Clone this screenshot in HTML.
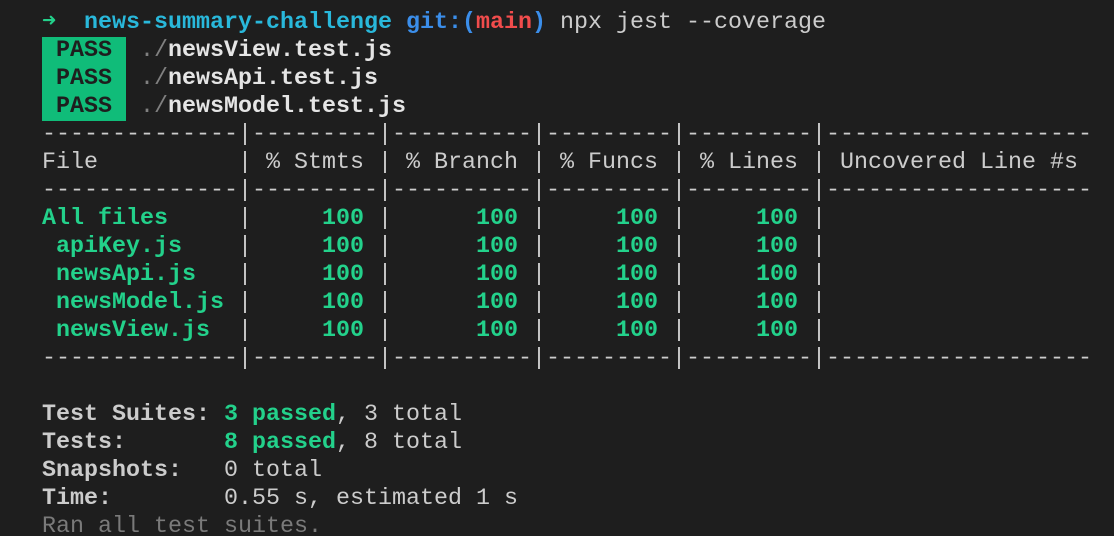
<!DOCTYPE html>
<html><head><meta charset="utf-8">
<style>
html,body{margin:0;padding:0;background:#1e1e1e;width:1114px;height:536px;overflow:hidden}
pre{margin:-19px 0 0 42px;font-family:"Liberation Mono","DejaVu Sans Mono",monospace;font-size:23.33px;letter-spacing:0;line-height:28px;color:#cccccc;white-space:pre}
b{font-weight:bold}
.g{color:#23d18b;font-weight:bold}
.c{color:#29b8db;font-weight:bold}
.bl{color:#3b8eea;font-weight:bold}
.r{color:#f14c4c;font-weight:bold}
.gr{color:#808080}
.w{color:#e5e5e5;font-weight:bold}
.pass{display:inline-block;height:28px;line-height:28px;vertical-align:top;background:#10bc79;color:#1e1e1e;font-weight:bold}
.dim{color:#7a7a7a}
</style></head><body>
<pre>  cab34bef..f3e6f3e  main -&gt; main
<span class="g">➜</span>  <span class="c">news-summary-challenge</span> <span class="bl">git:(</span><span class="r">main</span><span class="bl">)</span> npx jest --coverage
<span class="pass"> PASS </span> <span class="gr">./</span><span class="w">newsView.test.js</span>
<span class="pass"> PASS </span> <span class="gr">./</span><span class="w">newsApi.test.js</span>
<span class="pass"> PASS </span> <span class="gr">./</span><span class="w">newsModel.test.js</span>
--------------|---------|----------|---------|---------|-------------------
File          | % Stmts | % Branch | % Funcs | % Lines | Uncovered Line #s
--------------|---------|----------|---------|---------|-------------------
<span class="g">All files    </span> | <span class="g">    100</span> | <span class="g">     100</span> | <span class="g">    100</span> | <span class="g">    100</span> |
<span class="g"> apiKey.js   </span> | <span class="g">    100</span> | <span class="g">     100</span> | <span class="g">    100</span> | <span class="g">    100</span> |
<span class="g"> newsApi.js  </span> | <span class="g">    100</span> | <span class="g">     100</span> | <span class="g">    100</span> | <span class="g">    100</span> |
<span class="g"> newsModel.js</span> | <span class="g">    100</span> | <span class="g">     100</span> | <span class="g">    100</span> | <span class="g">    100</span> |
<span class="g"> newsView.js </span> | <span class="g">    100</span> | <span class="g">     100</span> | <span class="g">    100</span> | <span class="g">    100</span> |
--------------|---------|----------|---------|---------|-------------------

<b>Test Suites: </b><span class="g">3 passed</span>, 3 total
<b>Tests:       </b><span class="g">8 passed</span>, 8 total
<b>Snapshots:   </b>0 total
<b>Time:        </b>0.55 s, estimated 1 s
<span class="dim">Ran all test suites.</span>
</pre>
</body></html>
